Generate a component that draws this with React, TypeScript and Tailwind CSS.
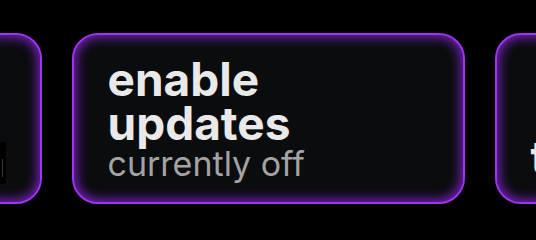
import React from "react";

const cardCls =
  "relative shrink-0 w-[393px] h-[171px] rounded-[26px] border-2 border-[#a133f5] bg-[#0b0c0e] shadow-[inset_0_0_12px_2px_rgba(145,40,235,0.85)] overflow-hidden";

export default function App() {
  return (
    <div
      className="w-[536px] h-[240px] bg-black overflow-hidden flex justify-center pt-[33px]"
      style={{ fontFamily: "Inter, 'Noto Sans', sans-serif" }}
    >
      <div className="flex gap-[30px] shrink-0">
        <div className={cardCls}>
          <div className="absolute right-[34px] top-[107px] w-[40px] h-[42px] bg-black">
            <div className="absolute right-[3px] top-[17px] w-[1px] h-[18px] bg-[#3a3a3a]" />
          </div>
        </div>
        <div className={cardCls}>
          <div className="pl-[34px] pt-[22px] flex flex-col">
            <div className="text-[46px] leading-[44px] font-bold text-[#e9e9e9]">
              enable
              <br />
              updates
            </div>
            <div className="text-[34px] leading-[36px] mt-[1px] text-[#a3a3a3]">
              currently off
            </div>
          </div>
        </div>
        <div className={cardCls}>
          <div className="pl-[34px] pt-[100px] flex flex-col">
            <div className="text-[46px] leading-[44px] font-bold text-[#e9e9e9]">
              theme
            </div>
          </div>
        </div>
      </div>
    </div>
  );
}
